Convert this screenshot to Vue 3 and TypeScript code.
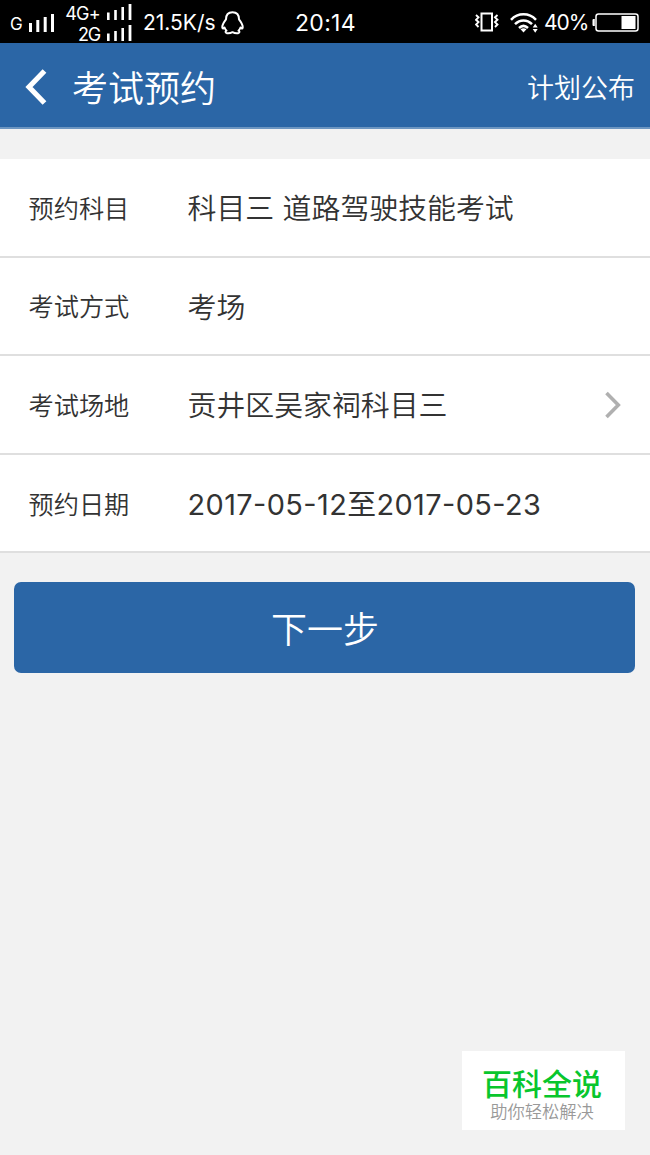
<script setup lang="ts">
interface Row {
  label: string
  value: string
  kind?: 'link' | 'date'
}

const rows: Row[] = [
  { label: '预约科目', value: '科目三 道路驾驶技能考试' },
  { label: '考试方式', value: '考场' },
  { label: '考试场地', value: '贡井区吴家祠科目三', kind: 'link' },
  { label: '预约日期', value: '2017-05-12至2017-05-23', kind: 'date' },
]
</script>

<template>
  <div class="screen">
    <div class="status">
      <span class="net">G</span>
      <svg class="bars-main" width="26" height="19" viewBox="0 0 26 19" fill="#fff">
        <path d="M0 9h3v9H0zM7.3 6h3v12h-3zM14.7 3h3v15h-3zM22 0h3v18h-3z" />
      </svg>
      <div class="sims">
        <div class="sim">
          <span class="sim-name wide">4G+</span>
          <svg width="25" height="16" viewBox="0 0 25 16" fill="#fff">
            <path d="M0 8.5h2.6V16H0zM7.2 6h2.6v10H7.2zM14.4 3H17v13h-2.6zM21.6 0h2.8v16h-2.8z" />
          </svg>
        </div>
        <div class="sim">
          <span class="sim-name">2G</span>
          <svg width="25" height="16" viewBox="0 0 25 16" fill="#fff">
            <path d="M0 8.5h2.6V16H0zM7.2 6h2.6v10H7.2zM14.4 3H17v13h-2.6zM21.6 0h2.8v16h-2.8z" />
          </svg>
        </div>
      </div>
      <span class="speed">21.5K/s</span>
      <svg class="qq" width="23" height="24" viewBox="0 0 23 24" fill="none" stroke="#fff" stroke-width="2" stroke-linejoin="round">
        <path d="M11.5 1.2C7.2 1.2 5 4 5 8.3C3.3 10.5 1 14 1.3 16.5C1.5 18 2.6 17.6 3.5 16.5C4 18 4.6 18.7 5.5 19.6C4.2 20.3 4 21.8 6 22.2C8.2 22.5 10 22 11.5 21.2C13 22 14.8 22.5 17 22.2C19 21.8 18.8 20.3 17.5 19.6C18.4 18.7 19 18 19.5 16.5C20.4 17.6 21.5 18 21.7 16.5C22 14 19.7 10.5 18 8.3C18 4 15.8 1.2 11.5 1.2Z" />
      </svg>
      <span class="clock">20:14</span>
      <svg class="vibrate" width="24" height="20" viewBox="0 0 24 20" fill="none" stroke="#fff" stroke-width="2">
        <path d="M6.5 1.5h10.500v17h-10.500z" />
        <path d="M1 3l2.500 2.300L1 7.800l2.500 2.300L1 12.500l2.500 2.500M22.500 3l-2.500 2.300 2.500 2.500-2.500 2.300 2.500 2.400-2.500 2.500" stroke-width="1.9" />
      </svg>
      <svg class="wifi" width="28" height="20" viewBox="0 0 28 20" fill="none" stroke="#fff" stroke-width="2.5">
        <path d="M1 6.8C8-.5 19-.5 26 6.8M5 11.2c5-5 12-5 17 0M9 15c3-2.8 6-2.8 9 0" />
        <path d="M10.5 16.3q3-2 6 0l-3 3.2zM22.700 14.500l2.500-3.700 2.500 3.700zM22.700 16l2.500 3.700 2.500-3.700z" fill="#fff" stroke="none" />
      </svg>
      <span class="percent">40%</span>
      <svg class="battery" width="48" height="20" viewBox="0 0 48 20">
        <rect x="4" y="1" width="42" height="17" rx="2.5" fill="none" stroke="#fff" stroke-width="1.5" />
        <path d="M2.8 6v7H1.5q-1 0-1-1V7q0-1 1-1zM29.500 3h14v13h-14z" fill="#fff" />
      </svg>
    </div>

    <header class="bar">
      <svg class="back" width="22" height="36" viewBox="0 0 22 36" fill="none" stroke="#fff" stroke-width="5.2">
        <path d="M19.500 2L4 18l15.500 16" />
      </svg>
      <h1>考试预约</h1>
      <span class="action">计划公布</span>
    </header>

    <main>
      <div class="list">
        <div v-for="row in rows" :key="row.label" class="row">
          <span class="label">{{ row.label }}</span>
          <span class="value" :class="row.kind">{{ row.value }}</span>
          <svg v-if="row.kind === 'link'" class="chevron" width="16" height="28" viewBox="0 0 16 28" fill="none" stroke="#b0b0b0" stroke-width="3.6">
            <path d="M1.500 2L13.300 14L1.500 26" />
          </svg>
        </div>
      </div>
      <button class="next" type="button">下一步</button>
    </main>

    <aside class="badge">
      <strong>百科全说</strong>
      <span>助你轻松解决</span>
    </aside>
  </div>
</template>

<style>
body {
  margin: 0;
  background: #f2f2f2;
}
</style>

<style scoped>
.screen {
  position: relative;
  width: 650px;
  height: 1155px;
  overflow: hidden;
  background: #f2f2f2;
  font-family: "Noto Sans CJK SC", sans-serif;
  font-weight: 350;
  color: #333;
}
.status {
  display: flex;
  align-items: center;
  box-sizing: border-box;
  height: 43px;
  padding: 2px 0 0 10px;
  background: #000;
  color: #fff;
  font-family: Inter, sans-serif;
  font-weight: 400;
  line-height: 1;
  white-space: nowrap;
}
.status > * {
  flex: none;
}
.net {
  width: 19px;
  font-size: 17px;
  padding-top: 3px;
}
.bars-main {
  margin-top: 1px;
}
.sims {
  width: 68px;
  margin-left: 9px;
}
.sim {
  display: flex;
  align-items: center;
  justify-content: flex-end;
  height: 20.5px;
}
.sim-name {
  margin: 4px 7px 0 0;
  font-size: 18px;
  letter-spacing: -1.2px;
}
.sim-name.wide {
  letter-spacing: -0.7px;
}
.speed {
  width: 78px;
  margin-left: 11px;
  font-size: 21px;
}
.clock {
  width: 64px;
  margin-left: 51px;
  padding-top: 2px;
  font-size: 23px;
  letter-spacing: 0.3px;
}
.vibrate {
  margin-left: 116px;
  margin-bottom: 2px;
}
.wifi {
  margin-left: 11px;
}
.percent {
  width: 44px;
  margin-left: 6px;
  font-size: 21px;
  letter-spacing: -1px;
}
.battery {
  margin-left: 4px;
}
.bar {
  display: flex;
  align-items: center;
  box-sizing: border-box;
  height: 86px;
  padding: 2px 15px 0 25px;
  border-bottom: 2px solid #6d96c1;
  background: #2b66a6;
  color: #fff;
}
.back {
  margin-top: 2px;
}
h1 {
  margin: 0 0 0 25px;
  font-size: 36px;
  font-weight: 350;
  line-height: 50px;
}
.action {
  margin-left: auto;
  font-size: 27px;
}
.list {
  margin-top: 30px;
  background: #fff;
}
.row {
  display: flex;
  align-items: center;
  box-sizing: border-box;
  height: 98.6px;
  padding: 0 29px 1px 28.500px;
  border-bottom: 2px solid #dfdfdf;
}
.label {
  width: 159px;
  font-size: 25.200px;
}
.value {
  margin-top: -1px;
  font-size: 28.900px;
  word-spacing: 2px;
  white-space: nowrap;
}
.date {
  font-family: Inter, "Noto Sans CJK SC", sans-serif;
  font-weight: 400;
  font-feature-settings: "case";
  letter-spacing: 0.4px;
}
.chevron {
  margin: 2px 0 0 auto;
}
.next {
  display: block;
  width: 621px;
  height: 91px;
  margin: 29px 0 0 14.400px;
  padding: 0;
  border: 0;
  border-radius: 7px;
  background: #2b66a6;
  color: #fff;
  font: 350 36px/91px "Noto Sans CJK SC", sans-serif;
}
.badge {
  position: absolute;
  left: 462px;
  top: 1051px;
  display: flex;
  flex-direction: column;
  align-items: center;
  box-sizing: border-box;
  width: 163px;
  height: 79px;
  padding-top: 14px;
  padding-right: 3px;
  background: #fff;
}
.badge strong {
  color: #08c62d;
  font-size: 30px;
  font-weight: 500;
  line-height: 34px;
}
.badge span {
  margin-top: 1px;
  color: #999;
  font-size: 17.300px;
  line-height: 22px;
}
</style>
